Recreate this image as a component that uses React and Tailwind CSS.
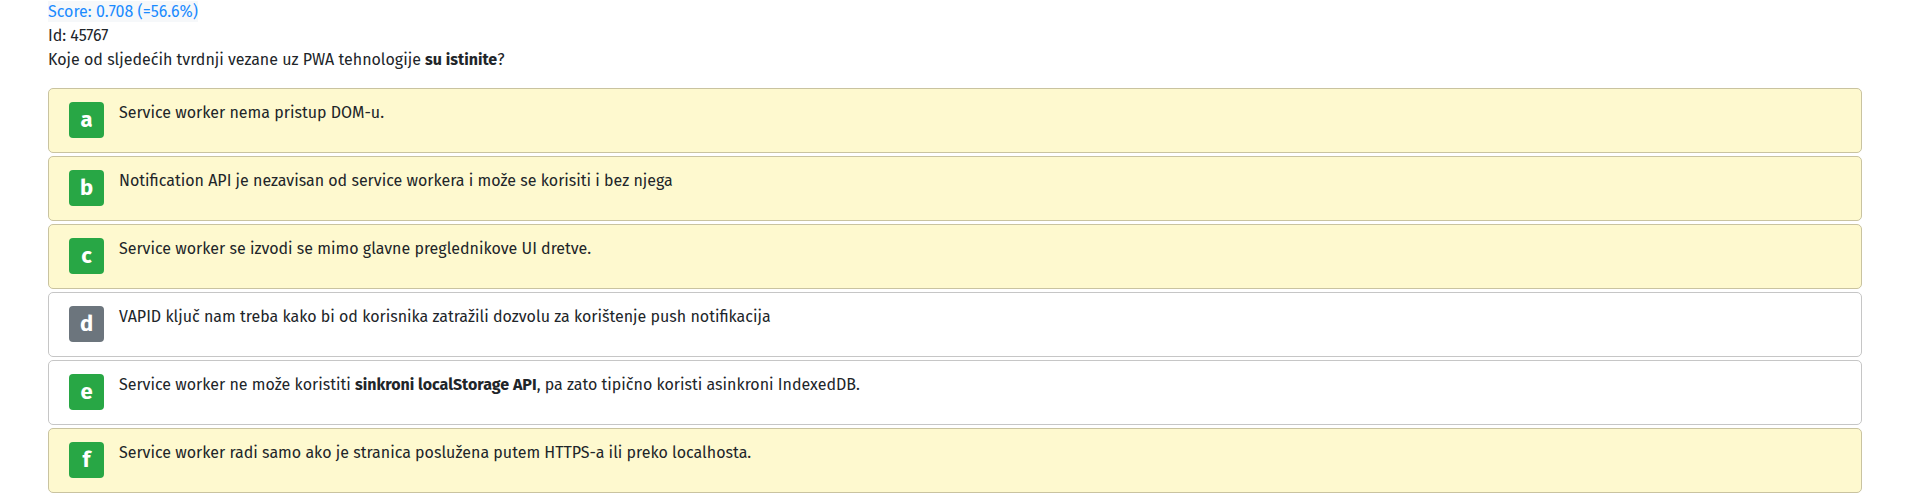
const answers = [
    { key: 'a', marked: true, correct: true, text: <>Service worker nema pristup DOM-u.</> },
    { key: 'b', marked: true, correct: true, text: <>Notification API je nezavisan od service workera i može se korisiti i bez njega</> },
    { key: 'c', marked: true, correct: true, text: <>Service worker se izvodi se mimo glavne preglednikove UI dretve.</> },
    { key: 'd', marked: false, correct: false, text: <>VAPID ključ nam treba kako bi od korisnika zatražili dozvolu za korištenje push notifikacija</> },
    {
        key: 'e',
        marked: false,
        correct: true,
        text: (
            <>
                Service worker ne može koristiti <b className="font-bold">sinkroni localStorage API</b>, pa zato tipično koristi asinkroni IndexedDB.
            </>
        ),
    },
    { key: 'f', marked: true, correct: true, text: <>Service worker radi samo ako je stranica poslužena putem HTTPS-a ili preko localhosta.</> },
];

function Answer({ item }) {
    return (
        <div
            className={`flex items-start mb-[3px] h-[65px] rounded-[5px] border px-5 pt-3 ${item.marked
                ? 'bg-[#fef9cf] border-[#c9c3a0]'
                : 'bg-white border-[#c6c6c6]'
                }`}
        >
            <span
                className={`mt-px flex h-9 w-[35px] shrink-0 items-center justify-center rounded-[4px] text-[22px] font-bold leading-none text-white ${item.correct ? 'bg-[#28a745]' : 'bg-[#6c757d]'
                    }`}
            >
                {item.key}
            </span>
            <p className="ml-[15px] text-base leading-6 text-[#212529]">{item.text}</p>
        </div>
    );
}

export default function App() {
    return (
        <div className="min-h-screen bg-white px-12 font-['Fira_Sans',Roboto,sans-serif] text-base leading-6 text-[#212529]">
            <div>
                <span className="bg-[#f6f8fa] py-px text-[#1b8bff]">Score: 0.708 (=56.6%)</span>
            </div>
            <div>Id: 45767</div>
            <div className="mb-4">
                Koje od sljedećih tvrdnji vezane uz PWA tehnologije <b className="font-bold">su istinite</b>?
            </div>

            {/* Answers */}
            <div>
                {answers.map((item) => (
                    <Answer key={item.key} item={item} />
                ))}
            </div>
        </div>
    );
}
